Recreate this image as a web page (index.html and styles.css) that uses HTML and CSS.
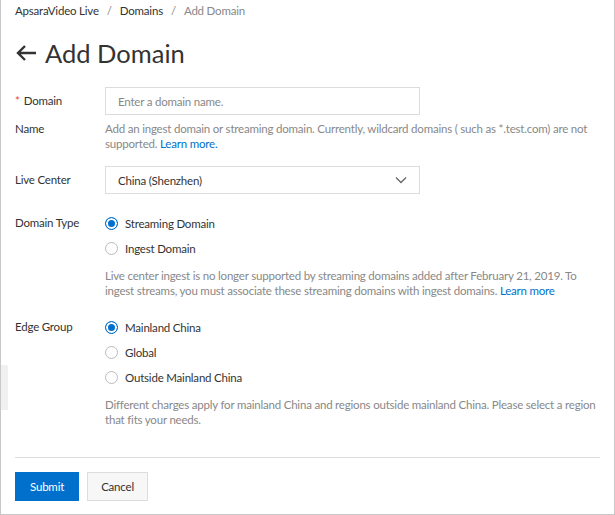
FILE: index.html
```html
<!DOCTYPE html>
<html>
<head>
<meta charset="utf-8">
<link rel="stylesheet" href="styles.css">
</head>
<body>
<div class="page">
  <nav class="crumbs">
    <span>ApsaraVideo Live</span><span class="sep">/</span><span>Domains</span><span class="sep">/</span><span class="cur">Add Domain</span>
  </nav>
  <h1 class="title">
    <svg class="back" width="22" height="18" viewBox="0 0 22 18"><path d="M21 9H3M10 2L3 9l7 7" fill="none" stroke="#333" stroke-width="2.4"/></svg>
    <span>Add Domain</span>
  </h1>
  <div class="form">
    <div class="row">
      <div class="label"><span class="req">*</span>Domain Name</div>
      <div class="ctrl">
        <input class="input" type="text" placeholder="Enter a domain name.">
        <p class="help">Add an ingest domain or streaming domain. Currently, wildcard domains ( such as *.test.com) are not supported. <a class="link">Learn more.</a></p>
      </div>
    </div>
    <div class="row">
      <div class="label">Live Center</div>
      <div class="ctrl">
        <div class="select"><span>China (Shenzhen)</span>
          <svg width="12" height="8" viewBox="0 0 12 8"><path d="M1 1.5l5 5 5-5" fill="none" stroke="#666" stroke-width="1.3"/></svg>
        </div>
      </div>
    </div>
    <div class="row">
      <div class="label">Domain Type</div>
      <div class="ctrl">
        <div class="radios">
          <div class="radio"><span class="dot on"></span>Streaming Domain</div>
          <div class="radio"><span class="dot"></span>Ingest Domain</div>
        </div>
        <p class="help">Live center ingest is no longer supported by streaming domains added after February 21, 2019. To ingest streams, you must associate these streaming domains with ingest domains. <a class="link">Learn more</a></p>
      </div>
    </div>
    <div class="row">
      <div class="label">Edge Group</div>
      <div class="ctrl">
        <div class="radios">
          <div class="radio"><span class="dot on"></span>Mainland China</div>
          <div class="radio"><span class="dot"></span>Global</div>
          <div class="radio"><span class="dot"></span>Outside Mainland China</div>
        </div>
        <p class="help">Different charges apply for mainland China and regions outside mainland China. Please select a region that fits your needs.</p>
      </div>
    </div>
  </div>
  <div class="footer">
    <button class="btn primary">Submit</button>
    <button class="btn">Cancel</button>
  </div>
  <div class="side-tab"></div>
</div>
</body>
</html>
```
FILE: styles.css
```css
* { box-sizing: border-box; }
html, body { margin: 0; padding: 0; background: #fff; }
body {
  font-family: "Lato", "Open Sans", sans-serif;
  font-size: 11.5px;
  letter-spacing: -0.2px;
  color: #333;
}
.page {
  position: relative;
  width: 615px;
  height: 515px;
  border-left: 1px solid #c8c8c8;
  border-right: 1px solid #c8c8c8;
  border-bottom: 1px solid #c8c8c8;
  padding: 0 14px;
}
.crumbs {
  height: 22px;
  line-height: 22px;
  display: flex;
  gap: 8px;
  color: #333;
}
.crumbs .cur { color: #888; }
.crumbs .sep { color: #888; }
.title {
  margin: 17px 0 0;
  height: 28px;
  display: flex;
  align-items: center;
  gap: 8px;
  font-size: 25.5px;
  font-weight: 400;
  letter-spacing: 0;
  color: #333;
}
.form { margin-top: 20px; display: flex; flex-direction: column; gap: 15px; }
.row { display: flex; }
.label {
  width: 90px;
  flex: none;
  padding-right: 20px;
  line-height: 28px;
  color: #333;
}
.req { color: #e84738; margin-right: 4px; }
.ctrl { flex: 1; min-width: 0; }
.input, .select {
  width: 315px;
  height: 28px;
  border: 1px solid #dcdcdc;
  font: inherit;
  letter-spacing: inherit;
  padding: 0 12px;
  outline: none;
  color: #333;
}
.input::placeholder { color: #888; }
.select {
  display: flex;
  align-items: center;
  justify-content: space-between;
}
.help {
  margin: 6px 0 0;
  line-height: 15px;
  color: #888;
}
.link { color: #0070cc; }
.radios { padding-top: 4px; display: flex; flex-direction: column; gap: 5px; }
.radio { height: 20px; display: flex; align-items: center; gap: 7px; }
.dot {
  width: 13px; height: 13px; border-radius: 50%;
  border: 1px solid #bbb;
  background: #fff;
  flex: none;
}
.dot.on { border-color: #0070cc; box-shadow: inset 0 0 0 2px #fff; background: #0070cc; }
.radios + .help { margin-top: 10px; }
.footer {
  margin-top: 30px;
  border-top: 1px solid #dcdcdc;
  padding-top: 14px;
  display: flex;
  gap: 8px;
}
.btn {
  height: 29px;
  padding: 0 13px;
  font: inherit;
  letter-spacing: inherit;
  border: 1px solid #ddd;
  background: #f7f7f7;
  color: #333;
}
.btn.primary { background: #0070cc; border-color: #0070cc; color: #fff; padding: 0 14px; }
.side-tab {
  position: absolute;
  left: 0; top: 365px;
  width: 7px; height: 45px;
  background: #f0f0f0;
  border-top-right-radius: 2px;
}
```
